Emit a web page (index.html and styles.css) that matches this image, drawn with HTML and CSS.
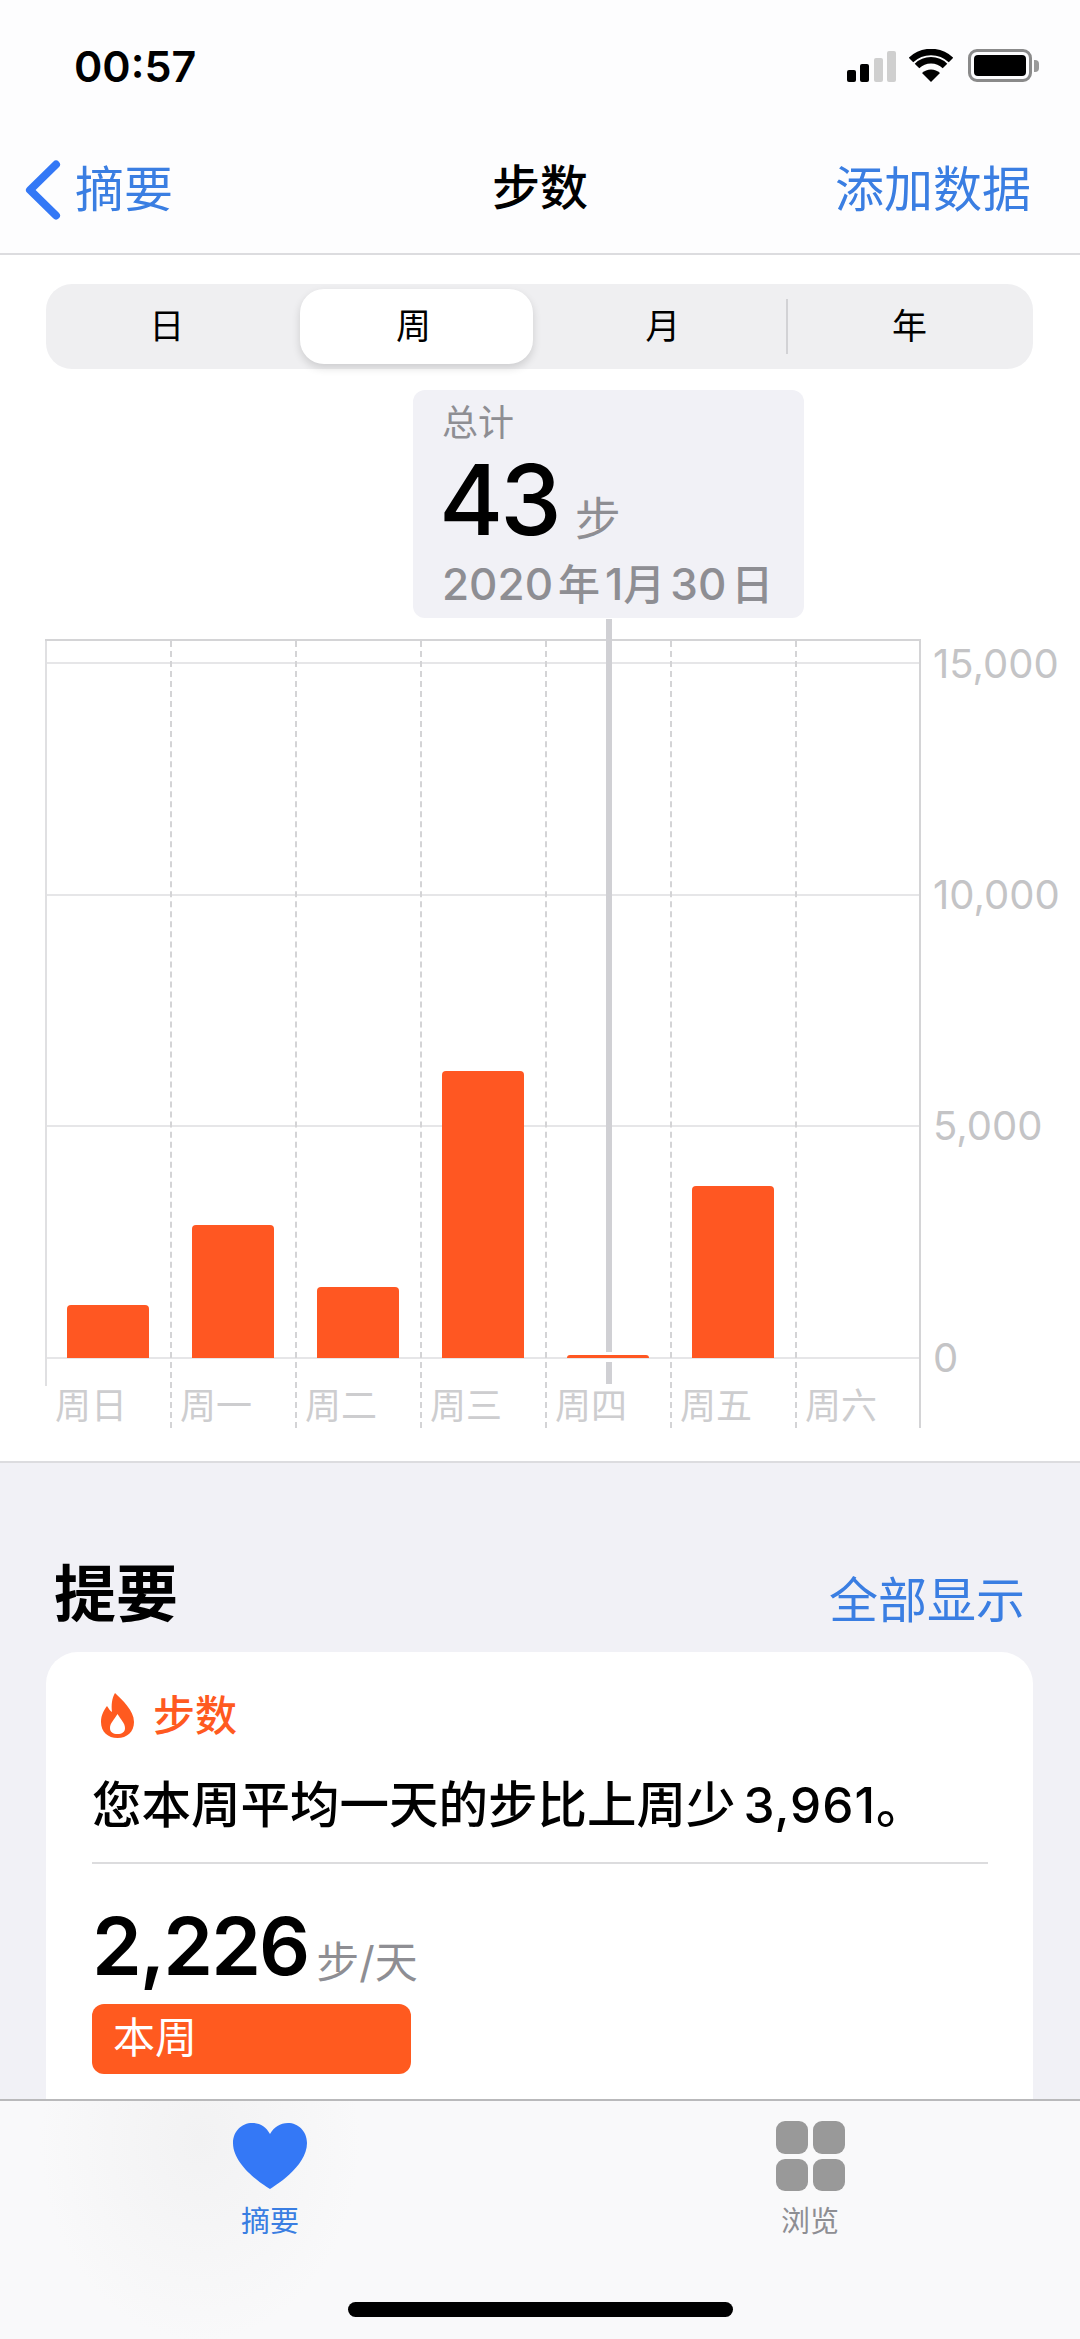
FILE: index.html
```html
<!DOCTYPE html>
<html lang="zh">
<head>
<meta charset="utf-8">
<title>步数</title>
<link rel="stylesheet" href="styles.css">
</head>
<body>
<div class="phone">
  <header class="header">
    <div class="status">
      <span class="time">00:57</span>
      <div class="status-icons">
        <div class="signal">
          <i class="sig s1"></i><i class="sig s2"></i><i class="sig s3 off"></i><i class="sig s4 off"></i>
        </div>
        <svg class="wifi" width="44" height="33" viewBox="0 0 44 33">
          <path d="M22 33 L13 24 A13 13 0 0 1 31 24 Z" fill="#000"/>
          <path d="M8 17 A20 20 0 0 1 36 17" fill="none" stroke="#000" stroke-width="6.5"/>
          <path d="M2 11 A29 29 0 0 1 42 11" fill="none" stroke="#000" stroke-width="6.5"/>
        </svg>
        <div class="battery"><div class="battery-body"><div class="battery-fill"></div></div><div class="battery-cap"></div></div>
      </div>
    </div>
    <nav class="nav">
      <a class="back">
        <svg class="chevron" width="36" height="60" viewBox="0 0 36 60"><path d="M31 4.5 L5 30 L31 55.5" fill="none" stroke="#3478f6" stroke-width="8" stroke-linecap="round" stroke-linejoin="round"/></svg>
        <span>摘要</span>
      </a>
      <h1 class="title">步数</h1>
      <a class="add">添加数据</a>
    </nav>
  </header>

  <main class="content">
    <section class="chart-section">
      <div class="segments">
        <div class="seg nudge">日</div>
        <div class="seg active nudge">周</div>
        <div class="seg">月</div>
        <div class="seg divided">年</div>
      </div>

      <div class="tooltip">
        <div class="tip-label">总计</div>
        <div class="tip-value"><span class="tip-num">43</span><span class="tip-unit">步</span></div>
        <div class="tip-date">2020<span class="cjk-gap">年</span>1<span class="cjk-tight">月</span>30<span class="cjk-gap">日</span></div>
      </div>

      <div class="plot">
        <div class="gridline g15"></div>
        <div class="gridline g10"></div>
        <div class="gridline g5"></div>
        <div class="gridline g0"></div>
        <span class="ylabel y15">15,000</span>
        <span class="ylabel y10">10,000</span>
        <span class="ylabel y5">5,000</span>
        <span class="ylabel y0">0</span>
        <div class="days">
          <div class="day first"><div class="bar-area"><div class="bar" style="height:53px"></div></div><div class="day-label">周日</div></div>
          <div class="day"><div class="bar-area"><div class="bar" style="height:133px"></div></div><div class="day-label">周一</div></div>
          <div class="day"><div class="bar-area"><div class="bar" style="height:71px"></div></div><div class="day-label">周二</div></div>
          <div class="day"><div class="bar-area"><div class="bar" style="height:287px"></div></div><div class="day-label">周三</div></div>
          <div class="day"><div class="bar-area"><div class="bar" style="height:3px"></div></div><div class="day-label">周四</div></div>
          <div class="day"><div class="bar-area"><div class="bar" style="height:172px"></div></div><div class="day-label">周五</div></div>
          <div class="day"><div class="bar-area"></div><div class="day-label">周六</div></div>
        </div>
        <div class="cursor cursor-top"></div>
        <div class="cursor cursor-bottom"></div>
      </div>
    </section>

    <section class="highlights">
      <div class="hl-head">
        <h2 class="hl-title">提要</h2>
        <a class="hl-all">全部显示</a>
      </div>
      <article class="card">
        <div class="card-head">
          <svg class="flame" width="33" height="45" viewBox="0 0 33 45"><path fill-rule="evenodd" fill="#ff5a1f" d="M14 0 C21 7 33 17 33 29 C33 39 26 45 16.500 45 C7 45 0 39 0 29 C0 22 3 17 6 13 C8 16 9 18 11 19 C10 12 11 5 14 0 Z M16.500 21 C13 27 9 30 9 35 C9 39 12 41 16.500 41 C21 41 24 39 24 35 C24 30 20 27 16.500 21 Z"/></svg>
          <span class="card-tag">步数</span>
        </div>
        <p class="card-text">您本周平均一天的步比上周少<span class="card-number">3,961</span>。</p>
        <div class="card-rule"></div>
        <div class="metric"><span class="metric-num">2,226</span><span class="metric-unit">步/天</span></div>
        <div class="week-bar">本周</div>
      </article>
    </section>
  </main>

  <footer class="tabbar">
    <div class="tabs">
      <div class="tab tab-on">
        <svg width="74" height="66" viewBox="0 0 74 66"><path fill="#3478f6" d="M37 66 C34 64 0 44 0 20 C0 8 9 0 19 0 C27 0 33 4 37 11 C41 4 47 0 55 0 C65 0 74 8 74 20 C74 44 40 64 37 66 Z"/></svg>
        <span class="tab-label">摘要</span>
      </div>
      <div class="tab">
        <div class="grid-icon"><i></i><i></i><i></i><i></i></div>
        <span class="tab-label">浏览</span>
      </div>
    </div>
    <div class="home-indicator"></div>
  </footer>
</div>
</body>
</html>
```
FILE: styles.css
```css
* { box-sizing: border-box; }
html, body { margin: 0; padding: 0; }
body {
  font-family: Inter, "Noto Sans CJK SC", sans-serif;
  background: #fff;
  color: #000;
}
h1, h2, p { margin: 0; font-weight: inherit; font-size: inherit; }

.phone {
  width: 1080px;
  height: 2339px;
  display: flex;
  flex-direction: column;
  overflow: hidden;
  background: #f1f1f6;
}

/* Header */
.header {
  height: 255px;
  flex: none;
  background: #fdfdfe;
  border-bottom: 2px solid #dcdcdf;
  display: flex;
  flex-direction: column;
}
.status {
  height: 130px;
  padding: 0 41px 0 74px;
  display: flex;
  justify-content: space-between;
  align-items: flex-start;
}
.time {
  margin-top: 40px;
  font-size: 43px;
  line-height: 52px;
  font-weight: 600;
}
.status-icons {
  margin-top: 49px;
  display: flex;
  align-items: flex-end;
  height: 33px;
}
.signal {
  width: 49px;
  height: 32px;
  display: flex;
  align-items: flex-end;
  justify-content: space-between;
  margin-right: 13px;
}
.sig { display: block; width: 9px; background: #000; border-radius: 2px; }
.sig.off { background: #cfcfcf; }
.s1 { height: 12px; }
.s2 { height: 18px; }
.s3 { height: 24px; }
.s4 { height: 31px; }
.wifi { margin-right: 15px; }
.battery { display: flex; align-items: center; height: 33px; }
.battery-body {
  width: 64px;
  height: 33px;
  border: 3px solid #8a8a8a;
  border-radius: 9px;
  padding: 3px;
}
.battery-fill { width: 100%; height: 100%; background: #000; border-radius: 4px; }
.battery-cap { width: 5px; height: 12px; margin-left: 2px; background: #9a9a9a; border-radius: 0 4px 4px 0; }

.nav {
  height: 123px;
  padding: 0 49px 4px 25px;
  display: flex;
  justify-content: space-between;
  align-items: center;
  position: relative;
  font-size: 49px;
  line-height: 60px;
}
.back, .add { color: #3a7ee2; }
.back { display: flex; align-items: center; gap: 14px; }
.title {
  position: absolute;
  left: 0;
  right: 0;
  top: 28px;
  text-align: center;
  font-size: 48px;
  font-weight: 500;
}

/* Chart */
.content { flex: 1; min-height: 0; overflow: hidden; }
.chart-section {
  height: 1208px;
  background: #fff;
  border-bottom: 2px solid #dcdcdf;
  padding-top: 29px;
  position: relative;
}
.segments {
  margin: 0 47px 0 46px;
  height: 85px;
  padding: 5px 0;
  background: #efeff1;
  border-radius: 26px;
  display: grid;
  grid-template-columns: repeat(4, 1fr);
  font-size: 35px;
  line-height: 75px;
  text-align: center;
}
.seg { position: relative; }
.seg.nudge { padding-right: 5px; }
.seg.active {
  margin: 0 7px;
  background: #fff;
  border-radius: 24px;
  box-shadow: 0 4px 8px rgba(0, 0, 0, .14);
}
.seg.divided::before {
  content: "";
  position: absolute;
  left: 0;
  top: 10px;
  bottom: 10px;
  width: 2px;
  background: #d2d2d5;
}

.tooltip {
  position: absolute;
  left: 413px;
  top: 135px;
  width: 391px;
  height: 228px;
  padding: 12px 29px 0;
  background: #f1f1f6;
  border-radius: 12px;
  color: #8e8e93;
  z-index: 2;
}
.tip-label { font-size: 36px; line-height: 42px; }
.tip-value { display: flex; align-items: baseline; height: 112px; }
.tip-num {
  margin-left: -3px;
  font-size: 98px;
  line-height: 112px;
  font-weight: 500;
  color: #000;
  letter-spacing: -3px;
}
.tip-unit { font-size: 46px; margin-left: 16px; }
.tip-date { font-size: 44px; line-height: 56px; font-weight: 500; white-space: nowrap; }
.cjk-gap { margin: 0 5px; font-size: 42px; }
.cjk-tight { font-size: 42px; margin-right: 5px; }

.plot {
  position: absolute;
  left: 45px;
  top: 384px;
  width: 876px;
  height: 789px;
  border-top: 2px solid #d4d4d6;
  border-right: 2px solid #d4d4d6;
}
.gridline { position: absolute; left: 0; right: 0; height: 2px; background: #e6e6e8; }
.g15 { top: 21px; }
.g10 { top: 253px; }
.g5 { top: 484px; }
.g0 { top: 716px; }
.ylabel {
  position: absolute;
  left: 888px;
  font-size: 40px;
  line-height: 46px;
  color: #c4c4c6;
  white-space: nowrap;
}
.y15 { top: 0; }
.y10 { top: 231px; }
.y5 { top: 462px; }
.y0 { top: 694px; }

.days {
  position: relative;
  display: grid;
  grid-template-columns: repeat(7, 125px);
  height: 787px;
}
.day { border-left: 2px dashed #d4d4d6; }
.day.first { border-left: 2px solid #e0e0e2; height: 745px; }
.bar-area {
  height: 717px;
  display: flex;
  justify-content: center;
  align-items: flex-end;
  padding-right: 1px;
}
.bar { width: 82px; background: #ff5722; border-radius: 4px 4px 0 0; }
.day-label {
  margin-top: 28px;
  padding-left: 8px;
  font-size: 36px;
  line-height: 40px;
  color: #cdcdcf;
  white-space: nowrap;
}
.cursor { position: absolute; left: 561px; width: 6px; background: #d0d0d4; }
.cursor-top { top: -22px; height: 733px; }
.cursor-bottom { top: 721px; height: 22px; }

/* Highlights */
.highlights { padding: 99px 47px 0 46px; }
.hl-head {
  display: flex;
  justify-content: space-between;
  align-items: flex-end;
  padding: 0 8px 16px 8px;
  height: 90px;
}
.hl-title { font-size: 62px; line-height: 82px; font-weight: 700; }
.hl-all { font-size: 49px; line-height: 70px; color: #3a7ee2; }
.card {
  height: 500px;
  background: #fff;
  border-radius: 32px 32px 0 0;
  padding: 41px 45px 0 46px;
}
.card-head { display: flex; align-items: center; gap: 19px; padding-left: 9px; height: 45px; }
.card-tag { font-size: 42px; line-height: 45px; font-weight: 500; color: #ff5a1f; }
.card-text {
  margin-top: 37px;
  font-size: 49.500px;
  line-height: 60px;
  font-weight: 500;
  white-space: nowrap;
}
.card-number { margin-left: 8px; letter-spacing: 1px; }
.card-rule { margin-top: 27px; height: 2px; background: #dcdcde; }
.metric { margin-top: 32px; height: 108px; line-height: 100px; white-space: nowrap; }
.metric-num { font-size: 80px; font-weight: 600; letter-spacing: -2px; }
.metric-unit { font-size: 43px; color: #8e8e93; margin-left: 8px; vertical-align: -3px; }
.week-bar {
  width: 319px;
  height: 70px;
  padding-left: 21px;
  background: #ff5a1f;
  border-radius: 12px;
  color: #fff;
  font-size: 42px;
  line-height: 68px;
}

/* Tab bar */
.tabbar {
  height: 240px;
  flex: none;
  background: radial-gradient(ellipse 160px 200px at 200px 40px, #f2f2f3, #f9f9fa 100%);
  border-top: 2px solid #b9b9bb;
  position: relative;
  margin-top: auto;
}
.tabs { display: flex; height: 140px; padding: 20px 0 0 0; }
.tab {
  flex: 1;
  display: flex;
  flex-direction: column;
  align-items: center;
  height: 118px;
  color: #8e8e93;
}
.tab-on { color: #3a7ee2; }
.tab svg, .grid-icon { flex: none; height: 70px; }
.tab-label { margin-top: 13px; font-size: 29px; line-height: 36px; }
.grid-icon {
  width: 69px;
  display: grid;
  grid-template-columns: 1fr 1fr;
  grid-template-rows: 1fr 1fr;
  gap: 5px;
}
.grid-icon i { display: block; background: #999; border-radius: 9px; }
.home-indicator {
  position: absolute;
  left: 348px;
  top: 201px;
  width: 385px;
  height: 15px;
  background: #000;
  border-radius: 8px;
}
```
